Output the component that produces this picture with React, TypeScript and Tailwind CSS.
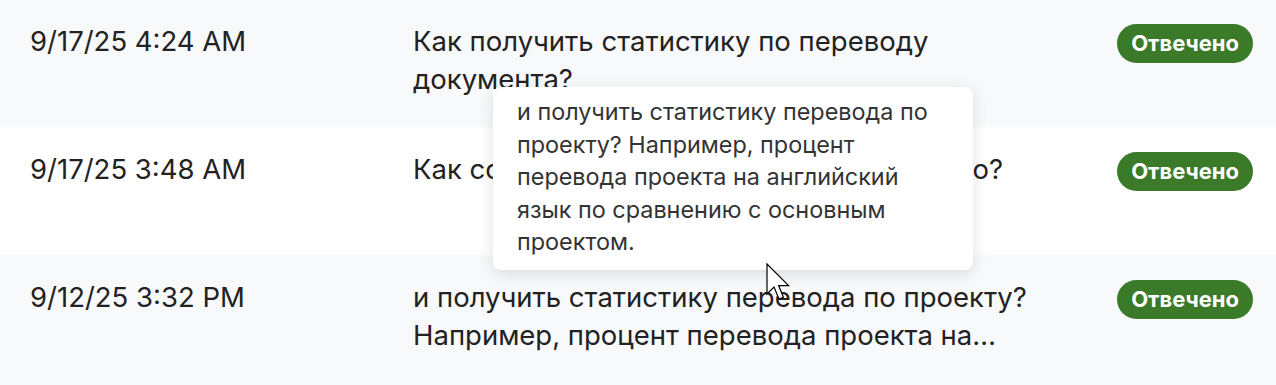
import React from "react";

const rows = [
  {
    date: "9/17/25 4:24 AM",
    text: "Как получить статистику по переводу документа?",
    bg: "bg-[#f8f9fb]",
    h: "h-[127px]",
    pt: "pt-[23px]",
    bt: "pt-6",
  },
  {
    date: "9/17/25 3:48 AM",
    text: "Как сопоставить перевод текстов? Можно?",
    bg: "bg-white",
    h: "h-[128px]",
    pt: "pt-6",
    bt: "pt-[25px]",
  },
  {
    date: "9/12/25 3:32 PM",
    text: "и получить статистику перевода по проекту? Например, процент перевода проекта на английский язык по сравнению с основным проектом.",
    bg: "bg-[#f8f9fb]",
    h: "h-[130px]",
    pt: "pt-6",
    bt: "pt-[25px]",
  },
];

export default function App() {
  return (
    <div
      className="relative w-[1276px] h-[385px] overflow-hidden bg-white text-[#222222]"
      style={{ fontFamily: "Inter, 'Noto Sans', sans-serif" }}
    >
      {rows.map((r, i) => (
        <div key={i} className={`flex items-start ${r.bg} ${r.h}`}>
          <div className={`w-[413px] shrink-0 pl-[30px] ${r.pt} text-[27.5px] leading-[37.5px]`}>
            {r.date}
          </div>
          <div className={`w-[640px] shrink-0 ${r.pt} text-[27.5px] leading-[37.5px]`}>
            <div className="line-clamp-2">{r.text}</div>
          </div>
          <div className={`flex-1 flex justify-end pr-[23px] ${r.bt}`}>
            <span className="rounded-full bg-[#3b7a29] text-white font-bold text-[22px] leading-[39px] h-[39px] px-[14px]">
              Отвечено
            </span>
          </div>
        </div>
      ))}

      <div className="absolute left-[493px] top-[87px] w-[480px] rounded-lg bg-white px-6 pt-[9px] pb-[11px] text-[23.4px] leading-[32.5px] text-[#333333] shadow-[0_4px_16px_rgba(0,0,0,0.12)]">
        и получить статистику перевода по проекту? Например, процент перевода проекта на английский язык по сравнению с основным проектом.
      </div>

      <svg
        className="absolute left-[765px] top-[262px]"
        width="28"
        height="40"
        viewBox="0 0 14 20"
      >
        <path
          d="M1 1 L1 16 L4.5 12.5 L7 18.5 L9.2 17.6 L6.8 11.8 L11.8 11.8 Z"
          fill="white"
          stroke="black"
          strokeWidth="0.6"
          strokeLinejoin="miter"
        />
      </svg>
    </div>
  );
}
